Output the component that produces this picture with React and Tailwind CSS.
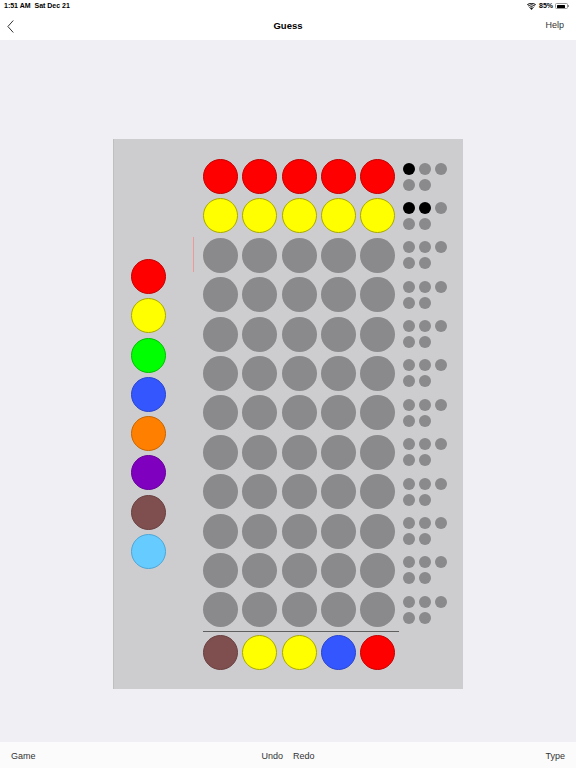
import React from 'react'

const FONT = { fontFamily: '"Liberation Sans", Arial, sans-serif' }

const COLORS = {
  red: 'bg-[#ff0000] border border-[#c40000]',
  yellow: 'bg-[#ffff00] border border-[#a9a900]',
  green: 'bg-[#00ff00] border border-[#00c000]',
  blue: 'bg-[#3356ff] border border-[#2a45cc]',
  orange: 'bg-[#ff8000] border border-[#c86400]',
  purple: 'bg-[#8000c0] border border-[#660099]',
  brown: 'bg-[#7f4f4f] border border-[#6a4040]',
  sky: 'bg-[#66ccff] border border-[#4ea6d6]',
  empty: 'bg-[#8a898b]',
}

const palette = ['red', 'yellow', 'green', 'blue', 'orange', 'purple', 'brown', 'sky']

// guesses so far, the rest are empty
const guesses = [
  { pegs: ['red', 'red', 'red', 'red', 'red'], score: ['k', 'g', 'g', 'g', 'g'] },
  { pegs: ['yellow', 'yellow', 'yellow', 'yellow', 'yellow'], score: ['k', 'k', 'g', 'g', 'g'] },
]
while (guesses.length < 12) {
  guesses.push({ pegs: Array(5).fill('empty'), score: Array(5).fill('g') })
}

const current = ['brown', 'yellow', 'yellow', 'blue', 'red']

const Peg = ({ color }) => (
  <div className={`w-[35px] h-[35px] rounded-full shrink-0 ${COLORS[color]}`} />
)

const Dot = ({ v }) => (
  <div className={`w-[12px] h-[12px] rounded-full ${v === 'k' ? 'bg-black' : 'bg-[#8a898b]'}`} />
)

const Score = ({ score }) => (
  <div className="flex flex-col gap-[4px]">
    <div className="flex gap-[4px]">
      <Dot v={score[0]} />
      <Dot v={score[1]} />
      <Dot v={score[2]} />
    </div>
    <div className="flex gap-[4px]">
      <Dot v={score[3]} />
      <Dot v={score[4]} />
    </div>
  </div>
)

const Wifi = () => (
  <svg width="9" height="7" viewBox="0 0 18 14" fill="#111">
    <path d="M9 14 L6 10.5 A4.5 4.5 0 0 1 12 10.5 Z" />
    <path d="M4.2 8.4 A7.2 7.2 0 0 1 13.8 8.4 L12.6 9.8 A5.4 5.4 0 0 0 5.4 9.8 Z" />
    <path d="M1.8 5.6 A10.8 10.8 0 0 1 16.2 5.6 L15 7 A9 9 0 0 0 3 7 Z" />
    <path d="M0 3.2 A13.5 13.5 0 0 1 18 3.2 L16.8 4.6 A11.7 11.7 0 0 0 1.2 4.6 Z" />
  </svg>
)

const App = () => {
  return (
    <div className="w-full h-[768px] flex flex-col bg-[#efeff4] text-[#222]" style={FONT}>
      {/* status + nav */}
      <div className="bg-white h-[40px] flex flex-col">
        <div className="h-[12px] flex items-center justify-between px-[4px]">
          <span className="text-[7px] font-semibold text-black">1:51 AM&nbsp;&nbsp;Sat Dec 21</span>
          <div className="flex items-center gap-[2px] pr-[3px]">
            <Wifi />
            <span className="text-[7px] font-semibold text-black ml-[1px]">85%</span>
            <div className="flex items-center">
              <div className="w-[13px] h-[6px] rounded-[1.5px] border border-[#999] p-[0.5px]">
                <div className="h-full w-[85%] bg-black rounded-[0.5px]" />
              </div>
              <div className="w-[1px] h-[2px] bg-[#999]" />
            </div>
          </div>
        </div>
        <div className="h-[28px] flex items-center justify-between px-[7px] relative">
          <svg width="7" height="13" viewBox="0 0 7 13" fill="none" stroke="#333" strokeWidth="1" strokeLinecap="round" strokeLinejoin="round">
            <path d="M6 0.8 L0.9 6.5 L6 12.2" />
          </svg>
          <span className="absolute left-1/2 -translate-x-1/2 text-[9.5px] font-bold text-black">Guess</span>
          <span className="text-[9px] text-[#333] pr-[5px]">Help</span>
        </div>
      </div>

      {/* board */}
      <div className="flex-1 flex justify-center pt-[99px]">
        <div className="w-[350px] h-[550px] bg-[#cdcccf] border-l border-[#bfbfc1] flex items-start pl-[17px] pt-[20px]">
          <div className="mt-[100px] flex flex-col gap-[4.3px]">
            {palette.map((c) => (
              <Peg key={c} color={c} />
            ))}
          </div>

          <div className="ml-[37px] flex flex-col">
            <div className="flex flex-col gap-[4.4px]">
              {guesses.map((g, i) => (
                <div key={i} className="relative flex items-center gap-[7.6px]">
                  {i === 2 && (
                    <div className="absolute left-[-10.5px] top-[-1px] w-[1.5px] h-[35px] bg-[#ee9a9a]" />
                  )}
                  <div className="flex gap-[4.3px]">
                    {g.pegs.map((p, j) => (
                      <Peg key={j} color={p} />
                    ))}
                  </div>
                  <Score score={g.score} />
                </div>
              ))}
            </div>
            <div className="mt-[3.5px] h-px w-[196px] bg-[#5f5f60]" />
            <div className="mt-[3.5px] flex gap-[4.3px]">
              {current.map((p, j) => (
                <Peg key={j} color={p} />
              ))}
            </div>
          </div>
        </div>
      </div>

      {/* toolbar */}
      <div className="h-[26px] bg-[#fbfbfc] grid grid-cols-3 items-center px-[11px] pt-[3px] text-[9px] text-[#333]">
        <span className="justify-self-start">Game</span>
        <div className="justify-self-center flex gap-[10px]">
          <span>Undo</span>
          <span>Redo</span>
        </div>
        <span className="justify-self-end">Type</span>
      </div>
    </div>
  )
}

export default App
